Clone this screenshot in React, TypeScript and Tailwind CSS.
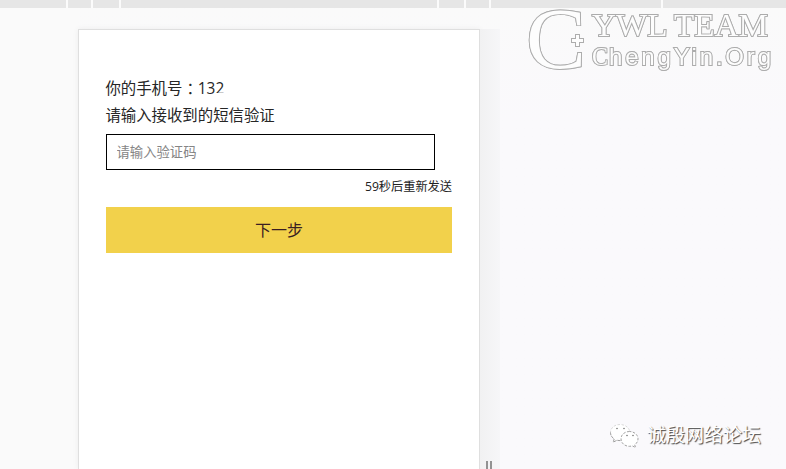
const cjk = "font-['Open_Sans','Noto_Sans_CJK_SC',sans-serif]";

function Ruler() {
  return (
    <div className="flex h-2 w-full shrink-0 gap-[2px] bg-[#fbfbfb]">
      <div className="w-[66px] bg-[#e6e6e6]" />
      <div className="w-[23px] bg-[#e6e6e6]" />
      <div className="w-[26px] bg-[#e6e6e6]" />
      <div className="w-[316px] bg-[#e6e6e6]" />
      <div className="w-[25px] bg-[#e6e6e6]" />
      <div className="w-[23px] bg-[#e6e6e6]" />
      <div className="w-[170px] bg-[#e6e6e6]" />
      <div className="flex-1 bg-[#e6e6e6]" />
    </div>
  );
}

function VerifyForm() {
  return (
    <div className="flex h-full w-[402px] flex-col border border-b-0 border-[#dfdfdf] bg-white pt-[45px] pr-[27px] pl-[27px] shadow-[0_0_6px_rgba(0,0,0,0.06)]">
      <p className="-ml-[0.6px] flex h-[27px] text-[15.4px] leading-[27px] whitespace-nowrap text-[#262626]">
        <span>你的手机号</span>
        <span className="w-[15.4px] pl-[4px]">：</span>
        <span>13</span>
        <span className="[clip-path:inset(0_0_9px_0)]">2</span>
      </p>
      <p className="-ml-[0.6px] h-[27px] text-[15.4px] leading-[27px] whitespace-nowrap text-[#262626]">请输入接收到的短信验证</p>
      <input
        className="mt-[5px] h-9 w-[329px] shrink-0 border border-black bg-white px-[9.500px] text-[13.33px] text-[#222] outline-none placeholder:text-[#858585]"
        placeholder="请输入验证码"
      />
      <p className="mt-[7px] h-5 text-right text-[12.2px] leading-5 text-[#222]">59秒后重新发送</p>
      <button className="mt-[10px] h-[46px] shrink-0 bg-[#f2d14b] text-base text-[#3a1e22]">下一步</button>
    </div>
  );
}

const serif = "Liberation Serif, serif";
const sans = "Liberation Sans, sans-serif";

function TeamMark() {
  return (
    <svg
      className="absolute top-0 left-[516px] overflow-visible"
      width="270"
      height="90"
      fill="#fdfdfd"
      stroke="#acacac"
      strokeWidth="1.8"
      style={{ filter: "drop-shadow(0.5px 0.8px 0.6px rgba(0,0,0,.28))", paintOrder: "stroke" }}
    >
      <text x="10" y="68" fontFamily={serif} fontSize="86" textLength="60" lengthAdjust="spacingAndGlyphs">
        C
      </text>
      <path d="M60 35h3v4h4v3h-4v4h-3v-4h-4v-3h4z" />
      <text x="76" y="36" fontFamily={serif} fontSize="31.500" textLength="176" lengthAdjust="spacingAndGlyphs">
        YWL TEAM
      </text>
      <text x="76" y="64.500" fontFamily={serif} fontSize="26" textLength="16" lengthAdjust="spacingAndGlyphs">
        C
      </text>
      <text x="93" y="64.500" fontFamily={sans} fontSize="24" textLength="162" lengthAdjust="spacing">
        hengYin.Org
      </text>
    </svg>
  );
}

function ForumMark() {
  return (
    <div className="absolute top-[420px] left-[608px] flex h-[30px] items-center gap-[7px]">
      <svg width="32" height="28" viewBox="0 0 32 28" fill="#fff" stroke="#8a8a8a" strokeWidth="0.8" strokeDasharray="2.500 1.500">
        <path d="M12 3.500C6.500 3.500 2.500 7 2.500 11.500c0 2.700 1.400 5 3.700 6.500l-1 3.200 3.800-2c1 .3 2 .4 3 .4 5.500 0 9.700-3.600 9.700-8.100S17.500 3.500 12 3.500z" stroke="#d0d0d0" />
        <path d="M2.500 11.500c0 2.700 1.400 5 3.700 6.500l-1 3.200 3.800-2c1 .3 2 .4 3 .4" fill="none" />
        <path d="M21.500 10.500c-5 0-8.500 3.300-8.500 7.400s3.600 7.400 8.500 7.400c1 0 2-.2 2.900-.4l3.200 1.700-.9-2.800c2-1.400 3.300-3.500 3.300-5.900 0-4.100-3.800-7.400-8.500-7.400z" />
        <g fill="#777" stroke="none">
          <circle cx="9" cy="7.500" r="0.800" />
          <circle cx="16" cy="7.500" r="0.800" />
          <circle cx="19" cy="14.500" r="0.800" />
          <circle cx="25" cy="14.500" r="0.800" />
        </g>
      </svg>
      <span className="text-[19px] leading-[30px] whitespace-nowrap text-white [text-shadow:1px_1px_1px_#444]">
        诚殷网络论坛
      </span>
    </div>
  );
}

export default function App() {
  return (
    <div className={`relative flex h-[469px] w-[786px] flex-col overflow-hidden bg-[#fafafa] ${cjk}`}>
      <Ruler />
      <div className="flex min-h-0 flex-1 bg-linear-to-b from-[#fafafa] to-[#faf9fc] to-25%">
        <div className="w-[78px] shrink-0 bg-[#fafafa]" />
        <div className="flex w-[422px] shrink-0 pt-[21px]">
          <VerifyForm />
          <div className="flex w-5 items-end bg-linear-to-r from-[#f1f1f2] to-[#f6f6f8] pl-[6px]">
            <div className="h-2 w-[6px] border-x-2 border-[#929292]" />
          </div>
        </div>
      </div>
      <TeamMark />
      <ForumMark />
    </div>
  );
}
